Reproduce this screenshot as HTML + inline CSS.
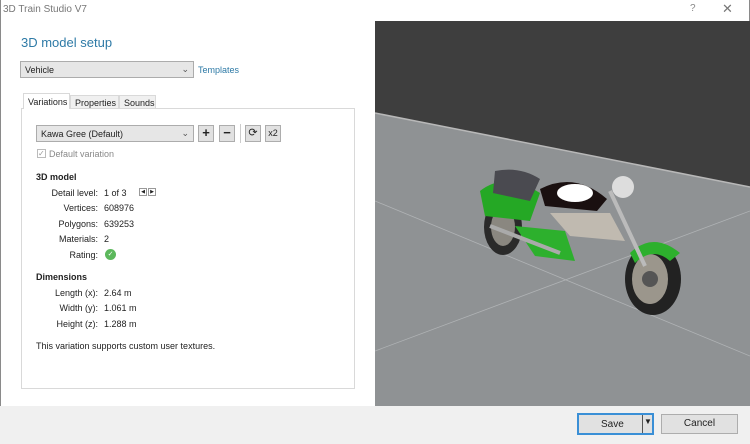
<!DOCTYPE html>
<html><head><style>
*{margin:0;padding:0;box-sizing:border-box}
body{width:750px;height:444px;background:#fff;font-family:"Liberation Sans",sans-serif;font-size:9px;color:#222;position:relative;overflow:hidden}
.a{position:absolute}
.btn{position:absolute;background:#e1e1e1;border:1px solid #adadad;text-align:center;font-size:9px;line-height:18px}
.lbl{position:absolute;width:98px;text-align:right}
.val{position:absolute;left:104px}
</style></head><body>
<div class="a" style="left:0;top:0;width:750px;height:444px;border:1px solid #8a8a8a;border-top:none"></div>
<div class="a" style="left:3px;top:4px;font-size:10px;color:#777">3D Train Studio V7</div>
<div class="a" style="left:690px;top:3px;font-size:10px;color:#888">?</div>
<div class="a" style="left:722px;top:1px;font-size:13px;color:#777">✕</div>
<div class="a" style="left:21px;top:35px;font-size:13px;color:#2e7aa6">3D model setup</div>
<div class="a" style="left:20px;top:61px;width:174px;height:17px;background:#e6e6e6;border:1px solid #acacac"><span class="a" style="left:4px;top:3px">Vehicle</span><span class="a" style="right:4px;top:2px;color:#555">⌄</span></div>
<div class="a" style="left:198px;top:65px;color:#2e7aa6">Templates</div>
<div class="a" style="left:21px;top:108px;width:334px;height:281px;border:1px solid #d9d9d9"></div>
<div class="a" style="left:23px;top:93px;width:47px;height:16px;background:#fff;border:1px solid #d9d9d9;border-bottom:none;padding:3px 0 0 4px">Variations</div>
<div class="a" style="left:70px;top:95px;width:49px;height:14px;background:#f0f0f0;border:1px solid #d9d9d9;padding:2px 0 0 4px">Properties</div>
<div class="a" style="left:119px;top:95px;width:37px;height:14px;background:#f0f0f0;border:1px solid #d9d9d9;padding:2px 0 0 4px">Sounds</div>
<div class="a" style="left:36px;top:125px;width:158px;height:17px;background:#e6e6e6;border:1px solid #acacac"><span class="a" style="left:4px;top:3px">Kawa Gree (Default)</span><span class="a" style="right:4px;top:2px;color:#555">⌄</span></div>
<div class="btn" style="left:198px;top:125px;width:16px;height:17px;font-size:13px;line-height:14px;font-weight:bold">+</div>
<div class="btn" style="left:219px;top:125px;width:16px;height:17px;font-size:13px;line-height:14px;font-weight:bold">−</div>
<div class="a" style="left:240px;top:124px;width:1px;height:19px;background:#ccc"></div>
<div class="btn" style="left:245px;top:125px;width:16px;height:17px;font-size:11px;line-height:15px">⟳</div>
<div class="btn" style="left:265px;top:125px;width:16px;height:17px;line-height:15px">x2</div>
<div class="a" style="left:37px;top:149px;width:9px;height:9px;border:1px solid #bbb;font-size:8px;line-height:7px;color:#999">✓</div>
<div class="a" style="left:49px;top:149px;color:#888">Default variation</div>
<div class="a" style="left:36px;top:172px;font-weight:bold">3D model</div>
<div class="a" style="left:0;top:188px;width:300px">
 <div class="lbl" style="top:0">Detail level:</div><div class="val" style="top:0">1 of 3</div>
 <div class="a" style="left:139px;top:0;width:8px;height:8px;border:1px solid #999;font-size:5px;line-height:6px;text-align:center">◀</div>
 <div class="a" style="left:148px;top:0;width:8px;height:8px;border:1px solid #999;font-size:5px;line-height:6px;text-align:center">▶</div>
 <div class="lbl" style="top:15px">Vertices:</div><div class="val" style="top:15px">608976</div>
 <div class="lbl" style="top:31px">Polygons:</div><div class="val" style="top:31px">639253</div>
 <div class="lbl" style="top:46px">Materials:</div><div class="val" style="top:46px">2</div>
 <div class="lbl" style="top:62px">Rating:</div>
 <div class="a" style="left:105px;top:61px;width:11px;height:11px;border-radius:50%;background:#5cb85c;color:#fff;font-size:7px;text-align:center;line-height:11px">✓</div>
</div>
<div class="a" style="left:36px;top:272px;font-weight:bold">Dimensions</div>
<div class="a" style="left:0;top:288px;width:300px">
 <div class="lbl" style="top:0">Length (x):</div><div class="val" style="top:0">2.64 m</div>
 <div class="lbl" style="top:15px">Width (y):</div><div class="val" style="top:15px">1.061 m</div>
 <div class="lbl" style="top:31px">Height (z):</div><div class="val" style="top:31px">1.288 m</div>
</div>
<div class="a" style="left:36px;top:341px">This variation supports custom user textures.</div>
<svg class="a" style="left:375px;top:21px" width="375" height="385" viewBox="0 0 375 385">
<rect width="375" height="385" fill="#8f9294"/>
<polygon points="0,0 375,0 375,166 0,92" fill="#3e3e3e"/>
<line x1="0" y1="92" x2="375" y2="166" stroke="#b8b8b8" stroke-width="1.5"/>
<line x1="0" y1="180" x2="375" y2="335" stroke="#b0b3b5" stroke-width="0.8"/>
<line x1="0" y1="330" x2="375" y2="190" stroke="#b0b3b5" stroke-width="0.8"/>
<ellipse cx="128" cy="206" rx="19" ry="28" fill="#2a2a2a"/><ellipse cx="128" cy="206" rx="12" ry="19" fill="#8a8780"/>
<ellipse cx="278" cy="258" rx="28" ry="36" fill="#222"/><ellipse cx="275" cy="258" rx="18" ry="25" fill="#9b968c"/><circle cx="275" cy="258" r="8" fill="#555"/>
<path d="M105,170 Q130,150 165,172 L155,200 L110,195Z" fill="#25a825"/>
<path d="M120,150 Q145,145 165,158 L155,180 L118,172Z" fill="#4a4a50"/>
<path d="M165,168 Q200,150 232,178 L222,190 L170,185Z" fill="#1a1010"/>
<ellipse cx="200" cy="172" rx="18" ry="9" fill="#fff"/>
<path d="M175,192 L195,215 L250,220 L235,192Z" fill="#c0bab0"/>
<path d="M140,205 L160,235 L200,240 L190,210Z" fill="#2db02d"/>
<path d="M255,232 Q278,210 305,232 L295,240 Q278,225 260,242Z" fill="#2db02d"/>
<line x1="235" y1="170" x2="270" y2="245" stroke="#bbb" stroke-width="4"/>
<circle cx="248" cy="166" r="11" fill="#ddd"/>
<line x1="115" y1="205" x2="185" y2="232" stroke="#aaa" stroke-width="4"/>
</svg>
<div class="a" style="left:0;top:406px;width:750px;height:38px;background:#f0f0f0"></div>
<div class="a" style="left:577px;top:413px;width:77px;height:22px;border:2px solid #3a8fd6;background:#e1e1e1"><span class="a" style="left:22px;top:4px;font-size:10px">Save</span><span class="a" style="left:63px;top:0;width:1px;height:18px;background:#555"></span><span class="a" style="left:65px;top:2px;font-size:8px">▼</span></div>
<div class="a" style="left:661px;top:414px;width:77px;height:20px;border:1px solid #adadad;background:#e1e1e1;text-align:center;line-height:18px;font-size:10px">Cancel</div>
</body></html>
